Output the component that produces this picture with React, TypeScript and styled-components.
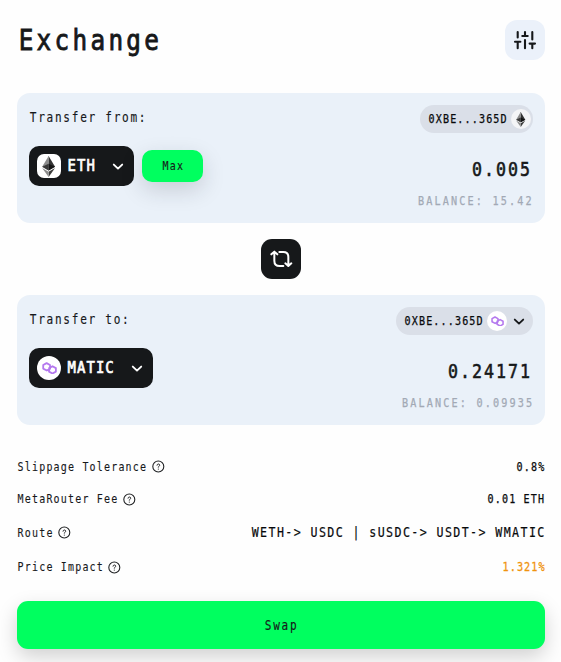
import React from 'react';
import styled, { createGlobalStyle } from 'styled-components';

const GlobalStyle = createGlobalStyle`
  *, *::before, *::after { box-sizing: border-box; }
  body { margin: 0; background: #fefefe; overflow: hidden; }
`;

const FONT = '"DejaVu Sans Mono", "Liberation Mono", monospace';
const INK = '#16181a';

type TypeProps = {
  $chars: number;
  $size: number;
  $pitch: number;
  $squeeze: number;
  $color: string;
  $stroke: number;
};

/* Condensed monospace text: every character occupies exactly one pitch. */
const TextBox = styled.span<TypeProps>`
  display: block;
  flex: none;
  width: ${p => p.$chars * p.$pitch}px;
  height: ${p => p.$size + 4}px;
  font: 400 ${p => p.$size}px/${p => p.$size + 4}px ${FONT};
  color: ${p => p.$color};
  -webkit-text-stroke: ${p => p.$stroke}px ${p => p.$color};
  white-space: pre;

  > span {
    display: block;
    width: max-content;
    letter-spacing: ${p => p.$pitch / p.$squeeze - p.$size * 0.602}px;
    text-indent: ${p => (p.$pitch / p.$squeeze - p.$size * 0.602) / 2}px;
    transform: scaleX(${p => p.$squeeze});
    transform-origin: left center;
    font-variant-ligatures: none;
  }
`;

const variants = {
  title: { size: 29, pitch: 17.95, squeeze: 0.84, stroke: 0.9, color: INK },
  label: { size: 13.5, pitch: 8.38, squeeze: 0.82, stroke: 0.15, color: INK },
  token: { size: 16, pitch: 9.45, squeeze: 0.87, stroke: 0.7, color: '#fff' },
  small: { size: 12, pitch: 7.2, squeeze: 0.83, stroke: 0.12, color: INK },
  address: { size: 12, pitch: 7.2, squeeze: 0.84, stroke: 0.25, color: '#08090b' },
  amount: { size: 20, pitch: 12, squeeze: 0.83, stroke: 0.6, color: INK },
  balance: { size: 12, pitch: 8.26, squeeze: 0.85, stroke: 0.25, color: '#a2a9b5' },
  route: { size: 13.5, pitch: 8.4, squeeze: 0.86, stroke: 0.2, color: '#08090b' },
  warning: { size: 12, pitch: 7.2, squeeze: 0.85, stroke: 0.3, color: '#f0930f' },
};

function Text({ kind, children }: { kind: keyof typeof variants; children: string }) {
  const v = variants[kind];
  return (
    <TextBox $chars={children.length} $size={v.size} $pitch={v.pitch} $squeeze={v.squeeze} $stroke={v.stroke} $color={v.color}>
      <span>{children}</span>
    </TextBox>
  );
}

const Page = styled.main`
  width: 561px;
  height: 662px;
  padding: 20px 16px 0 17px;
  display: flex;
  flex-direction: column;
  overflow: hidden;
`;

const Header = styled.header`
  height: 40px;
  margin-bottom: 33px;
  display: flex;
  justify-content: space-between;
  align-items: center;
`;

const IconButton = styled.button<{ $dark?: boolean }>`
  display: grid;
  place-items: center;
  width: 40px;
  height: 40px;
  padding: 0;
  border: 0;
  border-radius: ${p => (p.$dark ? 11 : 12)}px;
  background: ${p => (p.$dark ? INK : '#ebf1fa')};
  align-self: center;
`;

const Panel = styled.section`
  height: 130px;
  flex: none;
  padding: 12px;
  border-radius: 13px;
  background: #eaf1f9;
`;

const PanelTop = styled.div`
  display: flex;
  justify-content: space-between;
  align-items: flex-start;
  height: 41px;

  > :first-child { margin-top: 4px; }
`;

const PanelBottom = styled.div`
  display: flex;
  justify-content: space-between;
  align-items: flex-start;
`;

const Address = styled.div<{ $menu?: boolean }>`
  display: flex;
  align-items: center;
  height: 28px;
  gap: 4px;
  padding: 0 ${p => (p.$menu ? 6 : 2)}px 0 8px;
  border-radius: 14px;
  background: #dadfe8;
`;

const Coin = styled.span<{ $size: number; $radius: number; $bg: string }>`
  display: grid;
  place-items: center;
  flex: none;
  width: ${p => p.$size}px;
  height: ${p => p.$size}px;
  border-radius: ${p => p.$radius}px;
  background: ${p => p.$bg};
`;

const Controls = styled.div`
  display: flex;
  align-items: center;
  gap: 8px;
`;

const TokenButton = styled.button`
  display: flex;
  align-items: center;
  height: 40px;
  padding: 0 8px;
  border: 0;
  border-radius: 10px;
  background: ${INK};

  > :nth-child(2) { margin: 0 14.6px 0 6px; }
`;

const MaxButton = styled.button`
  display: grid;
  place-items: center;
  width: 61px;
  height: 32px;
  padding: 0;
  border: 0;
  border-radius: 10px;
  background: #00ff5f;
  box-shadow: 0 8px 22px rgba(28, 34, 50, 0.17);
`;

const Amounts = styled.div`
  display: flex;
  flex-direction: column;
  align-items: flex-end;
  gap: 12px;
  padding-top: 11px;

  > :first-child { margin-right: 2px; }
`;

const FlipRow = styled.div`
  height: 72px;
  flex: none;
  display: flex;
  justify-content: center;
`;

const Details = styled.dl`
  margin: 25px 0 0;
  height: 151px;
  display: grid;
  grid-template-rows: 33px 32px 35px 34px;
  align-items: center;
`;

const Detail = styled.div`
  display: flex;
  justify-content: space-between;
  align-items: center;
`;

const Term = styled.dt`
  display: flex;
  align-items: center;
  gap: 5px;
`;

const Value = styled.dd`
  margin: 0;
`;

const SwapButton = styled.button`
  display: grid;
  place-items: center;
  flex: none;
  width: 528px;
  height: 48px;
  padding: 1px 0 0;
  border: 0;
  border-radius: 11px;
  background: #00ff5f;
  box-shadow: 0 8px 20px rgba(0, 0, 0, 0.18);
`;

const EthIcon = ({ height }: { height: number }) => (
  <svg width={height * 0.63} height={height} viewBox="0 0 256 417">
    <path fill="#343434" d="M128 0 125 9.5v275.7l3 2.8 128-75.6z" />
    <path fill="#8c8c8c" d="M128 0 0 212.4 128 288V154z" />
    <path fill="#141414" d="m128 288 128-75.6L128 154z" />
    <path fill="#393939" d="m0 212.4 128 75.6V154z" />
    <path fill="#3c3c3b" d="m128 312 128-75.4L128 417z" />
    <path fill="#8c8c8c" d="M128 417V312L0 236.6z" />
  </svg>
);

const PolygonIcon = ({ width }: { width: number }) => (
  <svg width={width} height={width * 0.84} viewBox="0 0 15 12.6" fill="none" stroke="#b478ee" strokeWidth="1.8" strokeLinejoin="round" strokeLinecap="round">
    <path d="M8.1 6.7 4.8 8.5 1.2 6.6V3L4.6 1.1 8 3v3l-1 2.6v1l3.5 1.9 3.4-1.9V6.1l-3.4-1.9-3.4 1.9" />
  </svg>
);

const Chevron = ({ color }: { color: string }) => (
  <svg width="16" height="16" viewBox="0 0 16 16" fill="none" stroke={color} strokeWidth="1.9" strokeLinecap="round" strokeLinejoin="round">
    <path d="m3.8 6.6 4.2 4 4.2-4" />
  </svg>
);

const SlidersIcon = () => (
  <svg width="24" height="24" viewBox="0 0 24 24" stroke={INK} strokeWidth="2.1" strokeLinecap="round">
    <path d="M4.7 20.3v-6M4.7 9.5V4M12 20.3V12M12 7.5V4M19.3 20.3V16M19.3 11.5V4M2 13.8h5.4M9.3 8h5.4M16.6 15.6H22" />
  </svg>
);

const FlipIcon = () => (
  <svg width="40" height="40" viewBox="0 0 120 120" fill="none" stroke="#fff" strokeWidth="6" strokeLinecap="round" strokeLinejoin="round">
    <path d="m31 46 9-8 9 8M40 39v26q0 16 16 16h11M55 39h12q15 0 15 15v26M73 73l9 8 9-8" />
  </svg>
);

const HelpIcon = () => (
  <svg width="13" height="13" viewBox="0 0 13 13" fill="none" stroke="#202224" strokeLinecap="round" strokeLinejoin="round">
    <circle cx="6.3" cy="6.5" r="5.5" strokeWidth="1.1" />
    <path d="M5 5.2C5 3.5 7.7 3.6 7.7 5.1 7.7 6.2 6.3 6.2 6.3 7.2" strokeWidth="1" />
    <path d="M6.3 9v.1" strokeWidth="1.1" />
  </svg>
);

const details: { term: string; value: string; kind: keyof typeof variants }[] = [
  { term: 'Slippage Tolerance', value: '0.8%', kind: 'address' },
  { term: 'MetaRouter Fee', value: '0.01 ETH', kind: 'address' },
  { term: 'Route', value: 'WETH-> USDC | sUSDC-> USDT-> WMATIC', kind: 'route' },
  { term: 'Price Impact', value: '1.321%', kind: 'warning' },
];

export default function App() {
  return (
    <>
      <GlobalStyle />
      <Page>
        <Header>
          <Text kind="title">Exchange</Text>
          <IconButton aria-label="Settings"><SlidersIcon /></IconButton>
        </Header>

        <Panel>
          <PanelTop>
            <Text kind="label">Transfer from:</Text>
            <Address>
              <Text kind="address">0XBE...365D</Text>
              <Coin $size={20} $radius={10} $bg="#f4f5f7"><EthIcon height={15} /></Coin>
            </Address>
          </PanelTop>
          <PanelBottom>
            <Controls>
              <TokenButton>
                <Coin $size={24} $radius={7} $bg="#fff"><EthIcon height={21} /></Coin>
                <Text kind="token">ETH</Text>
                <Chevron color="#fff" />
              </TokenButton>
              <MaxButton><Text kind="small">Max</Text></MaxButton>
            </Controls>
            <Amounts>
              <Text kind="amount">0.005</Text>
              <Text kind="balance">BALANCE: 15.42</Text>
            </Amounts>
          </PanelBottom>
        </Panel>

        <FlipRow>
          <IconButton $dark aria-label="Switch tokens"><FlipIcon /></IconButton>
        </FlipRow>

        <Panel>
          <PanelTop>
            <Text kind="label">Transfer to:</Text>
            <Address $menu>
              <Text kind="address">0XBE...365D</Text>
              <Coin $size={20} $radius={10} $bg="#fff"><PolygonIcon width={13} /></Coin>
              <Chevron color={INK} />
            </Address>
          </PanelTop>
          <PanelBottom>
            <Controls>
              <TokenButton>
                <Coin $size={24} $radius={12} $bg="#fff"><PolygonIcon width={15} /></Coin>
                <Text kind="token">MATIC</Text>
                <Chevron color="#fff" />
              </TokenButton>
            </Controls>
            <Amounts>
              <Text kind="amount">0.24171</Text>
              <Text kind="balance">BALANCE: 0.09935</Text>
            </Amounts>
          </PanelBottom>
        </Panel>

        <Details>
          {details.map(d => (
            <Detail key={d.term}>
              <Term><Text kind="small">{d.term}</Text><HelpIcon /></Term>
              <Value><Text kind={d.kind}>{d.value}</Text></Value>
            </Detail>
          ))}
        </Details>

        <SwapButton><Text kind="label">Swap</Text></SwapButton>
      </Page>
    </>
  );
}
